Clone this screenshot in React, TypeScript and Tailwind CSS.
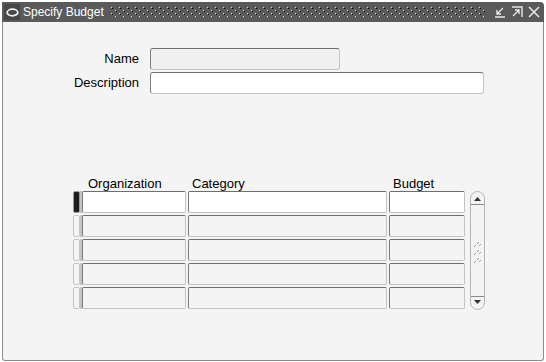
import React from 'react'

const font = { fontFamily: '"Liberation Sans", Arial, sans-serif' }

function Cell({ w, white }: { w: string; white?: boolean }) {
  return (
    <div
      className={[
        'h-[22px] rounded-[2px] border border-t-[#6e6e6e] border-l-[#7a7a7a] border-b-[#c2c2c2] border-r-[#c2c2c2]',
        w,
        white ? 'bg-white' : 'bg-[#f4f4f4]',
      ].join(' ')}
    />
  )
}

function Row({ current }: { current?: boolean }) {
  return (
    <div className="flex h-[22px] items-stretch">
      <div className="flex w-[9px]">
        <div
          className={[
            'w-[7px] rounded-[2px] border',
            current ? 'border-[#9a9a9a] bg-[#1c1c1c]' : 'border-[#c4c4c4] bg-[#f4f4f4]',
          ].join(' ')}
        />
        <div className="w-[2px] bg-[#c4c4c4]" />
      </div>
      <div className="flex gap-[2px]">
        <Cell w="w-[104px]" white={current} />
        <Cell w="w-[199px]" white={current} />
        <Cell w="w-[76px]" white={current} />
      </div>
    </div>
  )
}

function Scrollbar() {
  return (
    <div className="flex h-[119px] w-[15px] flex-col rounded-[8px] border border-[#b4b4b4] bg-[#f4f4f4]">
      <div className="flex h-[13px] items-end justify-center border-b border-[#8a8a8a] pb-[3px]">
        <svg width="7" height="4" viewBox="0 0 7 4">
          <path d="M0 4 L3.5 0 L7 4 Z" fill="#333" />
        </svg>
      </div>
      <div className="flex flex-1 items-center justify-center">
        <svg width="9" height="26" viewBox="0 0 9 26" className="mt-[6px]">
          {[0, 8, 16].map((y) => (
            <g key={y} fill="#9a9a9a">
              <rect x="5" y={y + 1} width="1" height="1" />
              <rect x="4" y={y + 2} width="1" height="1" />
              <rect x="2" y={y + 4} width="1" height="1" />
              <rect x="1" y={y + 5} width="1" height="1" />
              <rect x="7" y={y + 3} width="1" height="1" />
              <rect x="6" y={y + 4} width="1" height="1" />
            </g>
          ))}
        </svg>
      </div>
      <div className="flex h-[13px] items-start justify-center border-t border-[#8a8a8a] pt-[3px]">
        <svg width="7" height="4" viewBox="0 0 7 4">
          <path d="M0 0 L3.5 4 L7 0 Z" fill="#333" />
        </svg>
      </div>
    </div>
  )
}

export default function App() {
  return (
    <div className="h-[362px] w-[546px] bg-white pl-[2px] pr-[2px] pt-[2px] pb-[1px]" style={font}>
      <div className="flex h-full flex-col">
        {/* title bar */}
        <div className="flex h-[20px] items-center rounded-tr-[4px] bg-[#5a5a5a] pl-[2px] pr-[4px]">
          <div className="flex h-[16px] w-[16px] items-center justify-center bg-[#474747]">
            <svg width="13" height="9" viewBox="0 0 13 9">
              <ellipse cx="6.5" cy="4.5" rx="5.3" ry="3.3" fill="none" stroke="#f0f0f0" strokeWidth="1.8" />
            </svg>
          </div>
          <span className="ml-[3px] text-[12px] leading-none text-white">Specify Budget</span>
          <svg className="ml-[7px] flex-1" height="10">
            <defs>
              <pattern id="dots" width="8" height="6" patternUnits="userSpaceOnUse">
                <rect x="0" y="0" width="1" height="1" fill="#e0e0e0" />
                <rect x="1" y="1" width="1" height="1" fill="#000" />
                <rect x="4" y="3" width="1" height="1" fill="#e0e0e0" />
                <rect x="5" y="4" width="1" height="1" fill="#000" />
              </pattern>
            </defs>
            <rect x="0" y="0" width="100%" height="10" fill="url(#dots)" />
          </svg>
          <div className="ml-[8px] flex items-center gap-[5px]">
            <svg width="12" height="12" viewBox="0 0 12 12" stroke="#e8e8e8" strokeWidth="1.4" fill="none">
              <path d="M9 2 L3 8 M3 4 V8 H7 M1 11 H11" />
            </svg>
            <svg width="12" height="12" viewBox="0 0 12 12" stroke="#e8e8e8" strokeWidth="1.4" fill="none">
              <path d="M1 1 H11 V11 M2 10 L8 4 M4 4 H8 V8" />
            </svg>
            <svg width="12" height="12" viewBox="0 0 12 12" stroke="#e8e8e8" strokeWidth="1.5" fill="none">
              <path d="M1 1 L11 11 M11 1 L1 11" />
            </svg>
          </div>
        </div>

        {/* body */}
        <div className="flex flex-1 flex-col rounded-b-[3px] border border-t-0 border-[#8c8c8c] bg-[#f4f4f4] pt-[26px] text-[13px] text-black">
          <div className="flex h-[22px] items-center">
            <div className="w-[136px] text-right">Name</div>
            <div className="ml-[11px] h-[22px] w-[190px] rounded-[3px] border border-t-[#707070] border-l-[#808080] border-b-[#c4c4c4] border-r-[#c4c4c4] bg-[#f0f0f0]" />
          </div>
          <div className="mt-[2px] flex h-[22px] items-center">
            <div className="w-[136px] text-right">Description</div>
            <div className="ml-[11px] h-[22px] w-[334px] rounded-[3px] border border-t-[#707070] border-l-[#808080] border-b-[#c4c4c4] border-r-[#c4c4c4] bg-white" />
          </div>

          <div className="ml-[70px] mt-[83px] flex flex-col">
            <div className="flex h-[14px] items-center leading-[14px]">
              <div className="w-[9px]" />
              <div className="w-[106px] pl-[6px]">Organization</div>
              <div className="w-[201px] pl-[4px]">Category</div>
              <div className="w-[76px] pl-[4px]">Budget</div>
            </div>
            <div className="flex">
              <div className="flex flex-col gap-[2px]">
                <Row current />
                <Row />
                <Row />
                <Row />
                <Row />
              </div>
              <div className="ml-[5px]">
                <Scrollbar />
              </div>
            </div>
          </div>
        </div>
      </div>
    </div>
  )
}
